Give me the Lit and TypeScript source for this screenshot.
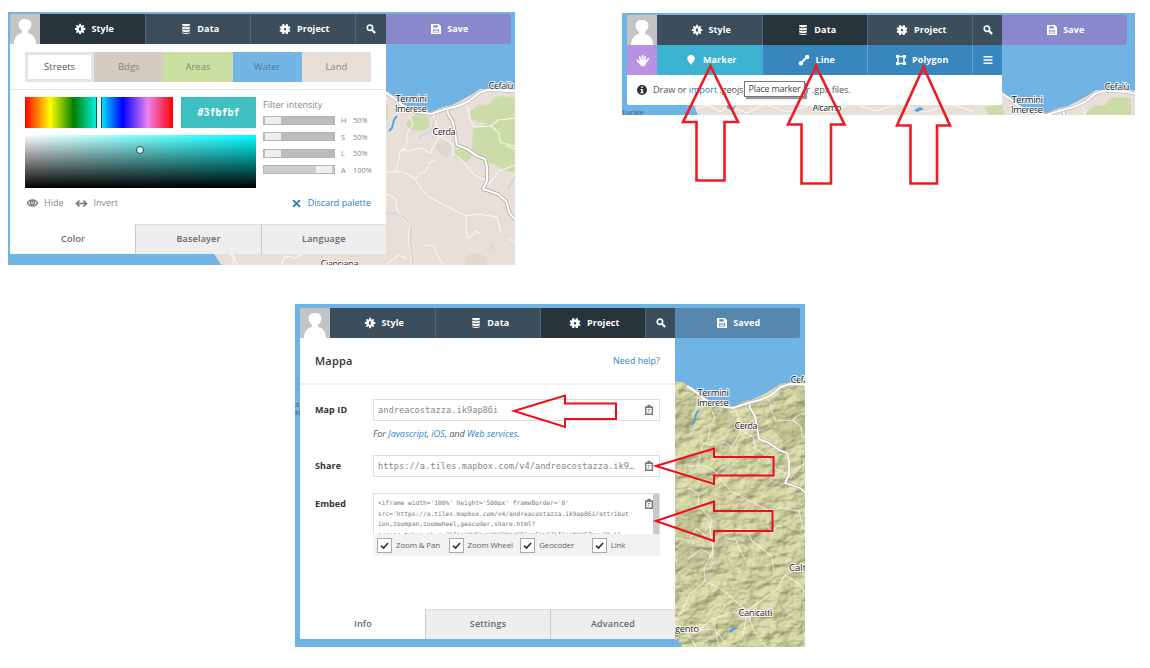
import { LitElement, html, svg, css } from "lit";
import { customElement, property } from "lit/decorators.js";

const icons: Record<string, unknown> = {
  style: svg`<path fill="currentColor" fill-rule="evenodd" d="M4.200-.2h1.800v1.500l1.100.4L8.200.7l1.200 1.200-1 1.100.4 1.100h1.500v1.800H8.800l-.4 1.100 1 1.100-1.200 1.200-1.100-1-1.100.4v1.500H4.200V8.700l-1.100-.4-1.100 1L.8 8.100l1-1.100-.4-1.100H-.1V4.100h1.500l.4-1.100-1-1.100L2 .7l1.100 1 1.100-.4zM5.800 3a2 2 0 0 0 0 4z"/>`,
  data: svg`<path fill="currentColor" d="M1.200 0h7.600v1.500Q5 3.400 1.200 1.500zM1.200 2.400Q5 4.300 8.800 2.400v2Q5 6.300 1.200 4.400zM1.200 5.300Q5 7.200 8.800 5.300v2Q5 9 1.200 7.300zM1.200 8.200Q5 9.900 8.800 8.200V9.200Q5 10.700 1.200 9.200z"/>`,
  project: svg`<path fill="currentColor" fill-rule="evenodd" d="M2.200.2h2l.3 1.500h1L5.900.2h2L8 1.900l.5.7H10.200v1.800L9 4.600v1l1.200.3v1.800H8.500l-.5.7-.2 1.700h-2l-.4-1.500h-1l-.3 1.500H2.200L2 8.300l-.5-.6H-.2V5.900L1 5.600v-1L-.2 4.400V2.600h1.700L2 1.900zM5 3.900a1.200 1.200 0 1 0 .01 0z"/>`,
  search: svg`<circle cx="3.900" cy="3.700" r="2.700" fill="none" stroke="currentColor" stroke-width="1.700"/><path d="M5.900 5.800l3.200 3.300" stroke="currentColor" stroke-width="2.200"/>`,
  save: svg`<path fill="currentColor" fill-rule="evenodd" d="M0 0h7.800L10 2.200V10H0zM2.200 1.300v2.100h4.600V1.300zM1.900 4.900v3.700h6.200V4.900z"/><path d="M2.600 6h4.800M2.600 7.600h4.800" stroke="currentColor" stroke-width=".9"/>`,
  hand: svg`<path fill="none" stroke="currentColor" stroke-width="1.600" stroke-linecap="round" d="M3.300 5.500L2.500 2M5 5V.9M6.800 5.200L7.400 1.600M8.500 5.900L10.300 3.400M2.600 7.500L.4 5"/><path fill="currentColor" d="M2.500 5l6.700-.2L8 8.400 6.800 10.200H4.200L1.700 7.400z"/>`,
  marker: svg`<path fill="currentColor" d="M5 0a3.700 3.700 0 0 1 3.700 3.700C8.700 6 6.200 7.500 5 10 3.800 7.500 1.300 6 1.300 3.700A3.700 3.700 0 0 1 5 0z"/>`,
  line: svg`<path stroke="currentColor" stroke-width="2" d="M2 8L8 2"/><circle cx="1.900" cy="8.200" r="2.200" fill="currentColor"/><circle cx="8.200" cy="2" r="2.200" fill="currentColor"/>`,
  polygon: svg`<path fill="none" stroke="currentColor" stroke-width="1.400" d="M1.500 1.500h7L7.800 5l.7 3.500h-7L2.300 5z"/><path fill="currentColor" d="M0 0h3v3H0zM7 0h3v3H7zM0 7h3v3H0zM7 7h3v3H7z"/>`,
  menu: svg`<path stroke="currentColor" stroke-width="1.500" d="M.5 1.700h9M.5 5h9M.5 8.300h9"/>`,
  info: svg`<circle cx="5" cy="5" r="5" fill="currentColor"/><path fill="#fff" d="M4.200 1.500h1.600v1.500H4.200zM3.500 4h2.300v3.200h.7v1H3.500v-1h.7V5h-.7z"/>`,
  eye: svg`<path fill="none" stroke="currentColor" stroke-width="1.200" d="M.5 4.500C2 .7 8 .7 9.500 4.500 8 8.100 2 8.100.5 4.500z"/><circle cx="5" cy="4.200" r="1.900" fill="none" stroke="currentColor" stroke-width="1.100"/><circle cx="5" cy="3.800" r=".8" fill="currentColor"/>`,
  invert: svg`<path fill="none" stroke="currentColor" stroke-width="1.500" d="M.6 5h8.800M3.200 2.300L.5 5l2.700 2.700M6.800 2.300l2.700 2.700-2.700 2.700"/>`,
  close: svg`<path stroke="currentColor" stroke-width="2.200" d="M1.200 1.200l7.600 7.600M8.800 1.200L1.200 8.800"/>`,
  clip: svg`<path fill="currentColor" fill-rule="evenodd" d="M3.500-.3h3v1.600H9V10H1V1.300h2.500zM2.400 3v5.600h5.200V3z"/><path d="M3.700 4.700h2.600M3.700 6.700h1.500" stroke="currentColor"/>`,
  check: svg`<path fill="none" stroke="currentColor" stroke-width="1.900" d="M1.200 5.200l2.700 2.600 5-5.600"/>`,
};

const icon = (name: string, size = 10) =>
  html`<svg class="icon" width=${size} height=${size} viewBox="0 0 10 10">${icons[name]}</svg>`;

@customElement("sicily-map")
class SicilyMap extends LitElement {
  @property() box = "";
  @property() region = "centre";
  @property({ type: Boolean }) terrain = false;

  static styles = css`
    :host { display: block; width: 100%; height: 100%; }
    svg { display: block; width: 100%; height: 100%; }
    .label {
      font: 500 9.6px "Open Sans", sans-serif;
      fill: #222;
      stroke: #fff;
      stroke-width: 2px;
      stroke-opacity: 0.85;
      paint-order: stroke;
      stroke-linejoin: round;
    }
    .sea-label { font: 8px "Open Sans", sans-serif; fill: #4a6278; }
  `;

  render() {
    const land = this.terrain ? "#cfd2a0" : "#e8dfd8";
    const coast =
      "M76 99L92 102 130 98 180 91 250 88 340 85 380 88 386 92 391 97 397 99 402 106 411 109 420 111 431 112 443 107 452 105 462 100 471 95 480 89 492 89 515 89 525 91V360H382L379 349 371 344 340 344 290 300 244 276 222 266 214 254 195 238 150 215 100 160 86 125z";
    const highway = "M447 107l1 7 5 8 4 23 10 4 10 7 8 3 2 8v14l-4 8 15 5 8 7 4 13 5 5 12 3";
    const shoreRoad = "M385 92l9 6 8 7 14 7 15 2 15-5 12-3 11-5 10-8 8-3 25 1 8 2";
    return html`<svg viewBox=${this.box} preserveAspectRatio="none">
      <defs>
        <clipPath id="land"><path d=${coast} /></clipPath>
        <filter id="relief" x="0" y="0" width="100%" height="100%" color-interpolation-filters="sRGB">
          <feTurbulence type="fractalNoise" baseFrequency=".06 .09" numOctaves="3" seed="14" result="n" />
          <feDiffuseLighting in="n" surfaceScale="4" diffuseConstant="1.15" lighting-color="#d6d8aa">
            <feDistantLight azimuth="225" elevation="56" />
          </feDiffuseLighting>
        </filter>
      </defs>
      <rect x="-20" width="560" height="380" fill="#70b3e5" />
      <path d=${coast} fill=${land} />
      <g clip-path="url(#land)">
        ${this.terrain
          ? svg`<rect x="360" y="80" width="160" height="280" filter="url(#relief)" opacity=".45"/>
            <g fill="#8d9463" opacity=".22">
              <path d="M374 108l9 3 8 12-4 14-13 2z"/><path d="M408 119l14-5 12 10-6 12-12-4z"/>
              <path d="M470 121l15-12 18 4v30l-18 6-14-12z"/><path d="M374 215l14-4 10 10 2 16-14 9-12-3z"/>
              <path d="M376 255l12-6 18 6 2 18-18 3-14-5z"/>
            </g>`
          : svg`
          <g fill="#cbdca8">
            <path d="M408 120l10-7 10 4 2 8-5 6-14-1-5-5z"/>
            <path d="M470 112l8-7 12-1 3-6 8-2 14 1v17l-16 5-7 5-14-2-8-4z"/>
            <path d="M473 129l10-3 14-8 18-3v57l-10-1-9-6-15-5-9-10z"/>
            <path d="M455 150l12-3 6 8-6 7-13-4z"/>
            <path d="M380 107l7-3 1 16-8 3z"/>
            <path d="M369 107l16-4v14h-9z"/>
          </g>
          <g fill="#ddd6ca" opacity=".8"><path d="M435 145l10-5 7 7-4 12-8-5z"/><path d="M466 256l12-4 10 7-3 7h-20z"/><path d="M487 249l5-6 4 9z"/></g>`}
        <g fill="none" stroke="#fff" stroke-opacity=${this.terrain ? 0.6 : 0.75} stroke-width="1.100" stroke-linejoin="round">
          <path d="M386 172h9l2-5 3-15 6-5 2-15 5-8-3-7"/>
          <path d="M433 112l4 15 1 8 14 9 1 10 9 6 12 15 11 5"/>
          <path d="M401 149l8 2 13-3 8 5 7-13 3-7"/>
          <path d="M395 171l11 2 9 6 4-5 7-3 3-8 6-3"/>
          <path d="M415 179l4 7 10 11 29 15 8 4 12-2 19 3 4 17 13 8"/>
          <path d="M466 216v17l3 6 7-8 4 2"/>
          <path d="M386 194l10 5 1 12 8 10 5 4-2 13 3 14v13"/>
          <path d="M467 106l4 15 3 6 17-1 7-6 17-2M491 126l8 7 1 9 16 5"/>
          <path d="M488 185l11-14 16-6M505 146l10 3M425 245l9 1 3 8 6 11"/>
          <path d="M386 265l13-10 8 4M80 108l12-4 12 7 10-6 17 7 18-9 22 8 23-7 27 4 15-6 24 8 23-7 25 8 30-7 20 7"/>
          ${this.terrain ? svg`
            <path d="M407 228l4 29-9 18 1 12 18 9 24 21-4 25M403 287l-15 13-8 17-8 11M445 317l30-22 8-14 20-8 22 4M445 317l-18 2-18 7-11 9M472 280l-2-18-20-15-5-9-13-4M445 317l7 20 12 16M483 281l14 9 12 15 16 7M374 244l13 2 7-12 10 8M371 330l14 8 9 15M385 337l27-2 14 17M424 310l-12 18 5 25"/>`
            : ""}
          <path d="M232 265l3-7-6-8 2-6M281 265l4-9 11 2 13-8M230 254l8 11"/>
        </g>
        ${this.terrain ? "" : svg`<path d="M386 213h11l7 5 7 9-1 14 3 24M419 137l12-6 5-15M508 190l7-14M500 233l8 5" fill="none" stroke="#9cc3da" stroke-opacity=".55"/>`}
        <path d="M397 116l-3 4-2 8-3 3" fill="none" stroke="#4a9fe5" stroke-width="1.800"/>
        ${this.terrain
          ? svg`<path d="M427 337l5-4 5 1-5 2-3 3z" fill="#4a9fe5"/>`
          : svg`<path d="M111 104l5 3 4-3-3 6-6-3zM298 109l6-3 4 2-7 3z" fill="#4a9fe5"/>`}
        <g fill="none" stroke-linejoin="round">
          <path d=${highway} stroke="#aaa49e" stroke-width=${this.terrain ? 2.6 : 3.6} />
          <path d=${highway} stroke="#fff" stroke-width=${this.terrain ? 1.8 : 2.2} />
        </g>
      </g>
      <path d=${shoreRoad} fill="none" stroke="#b3aaa3" stroke-width="3.200" />
      <path d=${shoreRoad} fill="none" stroke="#fff" stroke-width="2.200" />
      <g class="label">
        <text x="395.500" y="102" textLength="31.500">Termini</text>
        <text x="395" y="112" textLength="32">Imerese</text>
        <text x="488.500" y="89" textLength="25">Cefalù</text>
        <text x="432.500" y="134.500" textLength="23">Cerda</text>
        ${this.region === "south"
          ? svg`<text x="436.500" y="322" textLength="34">Canicattì</text>
              <text x="487" y="277">Caltanissetta</text>
              <text x="397" y="338" text-anchor="end" textLength="40">Agrigento</text>`
          : ""}
        ${this.region === "centre" ? svg`<text x="320.500" y="267" textLength="38">Cianciana</text>` : ""}
        ${this.region === "north" ? svg`<text x="196.500" y="110" textLength="29">Alcamo</text>` : ""}
      </g>
      <g class="sea-label">
        ${this.region === "south" ? svg`<text x="-7" y="113">a</text><text x="-8" y="121">al</text>` : ""}
        ${this.region === "north" ? svg`<text x="28" y="114" text-anchor="end" textLength="26">aturale</text>` : ""}
      </g>
    </svg>`;
  }
}

@customElement("app-root")
class AppRoot extends LitElement {
  static styles = css`
    * { box-sizing: border-box; }
    :host {
      display: block;
      position: relative;
      width: 1150px;
      height: 668px;
      overflow: hidden;
      background: #fff;
      font: 9px/12px "Open Sans", sans-serif;
      color: #777;
    }
    .top { display: flex; gap: 107px; padding: 12px 0 0 8px; align-items: flex-start; }
    .shot { position: relative; overflow: hidden; flex: none; }
    .s1 { width: 507px; height: 253px; padding: 2px; }
    .s2 { width: 513px; height: 102px; margin-top: 1px; padding: 2px 5px; }
    .s3 { width: 510px; height: 343px; margin: 39px 0 0 295px; padding: 4px 5px; }
    .map { position: absolute; inset: 0; }
    .ui { position: relative; }
    .row { display: flex; align-items: center; }
    .icon { display: block; flex: none; overflow: visible; }
    .bar { display: flex; height: 30px; }
    .avatar { width: 30px; height: 30px; flex: none; background: #c4c4c4; }
    .btn {
      width: 105px;
      flex: none;
      display: flex;
      align-items: center;
      justify-content: center;
      gap: 6.5px;
      padding-left: 4px;
      color: #fff;
      background: #3c4d5b;
      border-left: 1px solid #566674;
      font-weight: 700;
      font-size: 9px;
      letter-spacing: 0.1px;
    }
    .btn.on { background: #27343c; }
    .avatar + .btn { border-left: 0; }
    .btn.sq { width: 30px; padding: 0; }
    .s1 .btn.sq { width: 31px; }
    .btn.save { width: 125px; border: 0; background: #8a88cc; border-radius: 0 2px 2px 0; padding-left: 2px; }
    .btn.saved { background: #5887ae; }
    .btn.hand { background: #bb92e3; border: 0; }
    .btn.mark { background: #3bb2d0; border: 0; }
    .btn.draw { background: #3886be; border-color: #60a0cc; }
    .panel { width: 376px; background: #fff; border-radius: 0 0 2px 2px; overflow: hidden; }
    .s2 .panel, .s3 .panel { width: 375px; }
    .swatches { display: flex; padding: 8px 15px 0; height: 38px; }
    .swatch { width: 69.200px; flex: none; display: grid; place-items: center; font-size: 9.5px; }
    .streets { border: 3px solid #e5e5e5; background: #fff; color: #555; }
    .bdgs { background: #d5cbc0; color: #87807a; }
    .areas { background: #c8df9f; color: #7e8b67; }
    .water { background: #73b6e6; color: #4d7897; }
    .land { background: #e8dfd8; color: #8a8580; }
    .rule { height: 1px; background: #e2e2e2; margin-top: 7px; }
    .editor { display: flex; gap: 7px; padding: 7px 0 0 15px; height: 98px; }
    .left { width: 231px; }
    .pick { display: flex; gap: 8px; height: 30.500px; }
    .hue { width: 148px; position: relative; background: linear-gradient(90deg, red, #ff0 17%, green 33%, cyan 50%, blue 66%, violet 83%, red); }
    .knob { position: absolute; left: 71px; width: 6px; top: 0; bottom: 0; background: #dff; border: solid #055a60; border-width: 0 1px; }
    .hex { flex: 1; display: grid; place-items: center; color: #fff; background: #3fbfbf; font: 700 10px "DejaVu Sans Mono", monospace; padding-top: 1px; }
    .shade { position: relative; height: 53px; margin-top: 7.500px; background: linear-gradient(transparent, #000), linear-gradient(90deg, #fff, cyan); }
    .dot { position: absolute; left: 111px; top: 11px; width: 8px; height: 8px; border: 1.500px solid #1c4c50; border-radius: 50%; background: #d5ffff; }
    .filters { width: 112px; padding-top: 2px; }
    .filters .title { color: #888; margin-bottom: 1px; }
    .filter { display: grid; grid-template-columns: 72px 6px 1fr; column-gap: 6px; align-items: center; height: 16.500px; font-size: 7.400px; color: #888; line-height: 8px; }
    .track { height: 9px; border: 1px solid #b5b5b5; background: #bcbcbc; display: flex; padding: 0 1px; }
    .thumb { width: 16px; background: #eee; }
    .track.full { background: #cdcdcd; justify-content: flex-end; padding-right: 2px; }
    .tools { height: 12px; margin: 9px 15px 15px 17px; gap: 6px; color: #888; }
    .tools .inv { margin-left: 7px; }
    .tools .icon { color: #777; }
    .discard { margin-left: auto; display: flex; gap: 7px; align-items: center; color: #2f80bd; }
    .discard .icon { color: #2f80bd; }
    .tabs { display: flex; height: 30px; }
    .tab { flex: 1; display: grid; place-items: center; background: #eee; border-left: 1px solid #c8c8c8; border-top: 1px solid #ddd; padding-bottom: 1px; font-weight: 600; letter-spacing: 0.2px; color: #666; }
    .tab.on { background: #fff; border-color: #fff; }
    .note { height: 30px; padding-left: 10px; gap: 6px; color: #555; font-size: 9.200px; letter-spacing: -0.120px; }
    .note .icon { color: #333; }
    a { color: #3484bf; }
    .head { display: flex; justify-content: space-between; padding: 16px 15px 0; height: 45px; }
    .name { font-size: 11px; font-weight: 600; line-height: 14px; color: #333; letter-spacing: 0.2px; }
    .head a { line-height: 14px; }
    .body { border-top: 2px solid #f0f0f0; height: 226px; padding: 14px 15px 0; }
    .field { display: grid; grid-template-columns: 58px 287px; }
    .cap { font-weight: 700; color: #333; line-height: 22px; letter-spacing: 0.1px; }
    .input { height: 22px; border: 1px solid #ddd; display: flex; align-items: center; justify-content: space-between; padding: 0 5px 0 4px; font: 8.700px "DejaVu Sans Mono", monospace; color: #888; white-space: pre; }
    .input .icon, .embed .icon { color: #777; }
    .hint { font-style: italic; font-size: 9.100px; margin: 7px 0 15px 58px; color: #555; letter-spacing: -0.050px; }
    .share { margin-bottom: 16px; }
    .embed { position: relative; height: 41px; border: 1px solid #ddd; border-bottom: 0; overflow: hidden; display: flex; justify-content: space-between; }
    .code { font: 6.230px/10.500px "DejaVu Sans Mono", monospace; white-space: pre; color: #777; padding: 4px; }
    .scroll { width: 6px; flex: none; background: #c9c9c9; }
    .embed .icon { position: absolute; right: 5px; top: 5px; }
    .opts { display: flex; background: #f1f2f2; height: 22px; align-items: center; padding-left: 4px; font-size: 8px; color: #666; }
    .opt { display: flex; align-items: center; gap: 4px; width: 71.600px; flex: none; white-space: nowrap; letter-spacing: -0.180px; }
    .box { width: 15px; height: 15px; border: 1px solid #aaa; background: #fff; display: grid; place-items: center; color: #333; flex: none; }
    .tip { position: absolute; left: 117px; top: 66px; width: 61px; height: 16px; background: #fff; border: 1px solid #777; box-shadow: 2px 2px 1px #999; font: 9px/14px "Open Sans", sans-serif; color: #444; text-align: center; white-space: nowrap; letter-spacing: -0.250px; }
    .arrows { position: absolute; inset: 0; pointer-events: none; }
  `;

  bar(active: string, saved = false) {
    const item = (id: string, label: string) =>
      html`<div class="btn ${active === id ? "on" : ""}">${icon(id)}<span>${label}</span></div>`;
    return html`<div class="bar">
      <svg class="avatar" viewBox="0 0 30 30">
        <path fill="#fff" d="M4 30c0-6 3-10 8-11v-2C7 13 7 5 15 5s8 8 3 12v2c5 1 8 5 8 11z" />
      </svg>
      ${item("style", "Style")} ${item("data", "Data")} ${item("project", "Project")}
      <div class="btn sq">${icon("search")}</div>
      <div class="btn save ${saved ? "saved" : ""}">${icon("save")}<span>${saved ? "Saved" : "Save"}</span></div>
    </div>`;
  }

  tabs(names: string[]) {
    return html`<div class="tabs">${names.map((n, i) => html`<div class="tab ${i ? "" : "on"}">${n}</div>`)}</div>`;
  }

  render() {
    const swatches = ["Streets", "Bdgs", "Areas", "Water", "Land"];
    const filters = [["H", "50%"], ["S", "50%"], ["L", "50%"], ["A", "100%"]];
    const code = `<iframe width='100%' height='500px' frameBorder='0'
src='https://a.tiles.mapbox.com/v4/andreacostazza.ik9ap86i/attribut
ion,zoompan,zoomwheel,geocoder,share.html?
access_token=pk.eyJ1IjoiYW5kcmVhY29zdGF6emEiLCJhIjoiNXY5Zmxw20.iG`;
    return html`
      <div class="top">
        <section class="shot s1">
          <sicily-map class="map" box="8 12 507 253"></sicily-map>
          <div class="ui">
            ${this.bar("style")}
            <div class="panel">
              <div class="swatches">${swatches.map((s) => html`<div class="swatch ${s.toLowerCase()}">${s}</div>`)}</div>
              <div class="rule"></div>
              <div class="editor">
                <div class="left">
                  <div class="pick"><div class="hue"><div class="knob"></div></div><div class="hex">#3fbfbf</div></div>
                  <div class="shade"><div class="dot"></div></div>
                </div>
                <div class="filters">
                  <div class="title">Filter intensity</div>
                  ${filters.map(([k, v]) => html`<div class="filter"><div class="track ${k === "A" ? "full" : ""}"><div class="thumb"></div></div><span>${k}</span><span>${v}</span></div>`)}
                </div>
              </div>
              <div class="row tools">
                ${icon("eye", 11)}<span>Hide</span>
                <span class="inv">${icon("invert", 11)}</span><span>Invert</span>
                <span class="discard">${icon("close", 9)}<span>Discard palette</span></span>
              </div>
              ${this.tabs(["Color", "Baselayer", "Language"])}
            </div>
          </div>
        </section>
        <section class="shot s2">
          <sicily-map class="map" box="6 12 513 102" region="north"></sicily-map>
          <div class="ui">
            ${this.bar("data")}
            <div class="panel">
              <div class="bar">
                <div class="btn sq hand">${icon("hand", 11)}</div>
                <div class="btn mark">${icon("marker")}<span>Marker</span></div>
                <div class="btn draw">${icon("line")}<span>Line</span></div>
                <div class="btn draw">${icon("polygon")}<span>Polygon</span></div>
                <div class="btn sq draw">${icon("menu")}</div>
              </div>
              <div class="row note">${icon("info")}<span>Draw or <a>import</a> .geojson, .csv, .kml, or .gpx files.</span></div>
            </div>
            <div class="tip">Place marker</div>
          </div>
        </section>
      </div>
      <section class="shot s3">
        <sicily-map class="map" box="-7 10 510 343" region="south" terrain></sicily-map>
        <div class="ui">
          ${this.bar("project", true)}
          <div class="panel">
            <div class="head"><span class="name">Mappa</span><a>Need help?</a></div>
            <div class="body">
              <div class="field"><span class="cap">Map ID</span><div class="input"><span>andreacostazza.ik9ap86i</span>${icon("clip")}</div></div>
              <div class="hint">For <a>Javascript</a>, <a>iOS</a>, and <a>Web services</a>.</div>
              <div class="field share"><span class="cap">Share</span><div class="input"><span>https://a.tiles.mapbox.com/v4/andreacostazza.ik9…</span>${icon("clip")}</div></div>
              <div class="field">
                <span class="cap">Embed</span>
                <div>
                  <div class="embed"><div class="code">${code}</div><div class="scroll"></div>${icon("clip")}</div>
                  <div class="opts">${["Zoom & Pan", "Zoom Wheel", "Geocoder", "Link"].map((o) => html`<div class="opt"><span class="box">${icon("check", 9)}</span>${o}</div>`)}</div>
                </div>
              </div>
            </div>
            ${this.tabs(["Info", "Settings", "Advanced"])}
          </div>
        </div>
      </section>
      <svg class="arrows" width="1150" height="668" fill="none" stroke="#ed1c24" stroke-width="2.600">
        <path d="M710.500 66L738 122H724.500V180.500H696.500V122H683z" />
        <path d="M816 66L844.500 124.500H831V183.500H801.500V124.500H788z" />
        <path d="M923.500 67L950 125.500H937V183.500H910.500V125.500H897z" />
        <g stroke="#f00c18" stroke-width="2">
          <path d="M514 411L565 395.500V403.500H616V419H565V427z" />
          <path d="M656 466L714 448.500V457H773.500V475.500H714V484z" />
          <path d="M656 521L714 501.500V511H772.500V531H714V541z" />
        </g>
      </svg>
    `;
  }
}
